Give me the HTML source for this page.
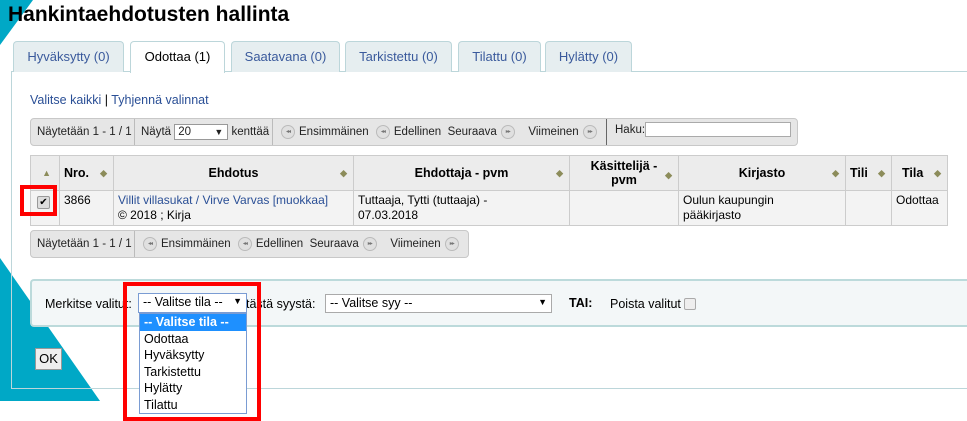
<!DOCTYPE html>
<html><head><meta charset="utf-8"><style>
*{box-sizing:border-box}
body{margin:0;width:967px;height:421px;position:relative;overflow:hidden;background:#fff;font-family:"Liberation Sans",Arial,sans-serif;font-size:12px;color:#000}
.a{position:absolute}
.tab{position:absolute;top:41px;height:31px;border:1px solid #bcd6da;border-bottom:none;background:#e6eef0;border-radius:4px 4px 0 0;color:#3a5a9c;font-size:13px;text-align:center;line-height:29px}
.tb{position:absolute;height:28px;background:#e6e6e6;border:1px solid #c8c8c8;border-radius:4px;font-size:11.5px;color:#222}
.tb > span{position:absolute;top:5px;white-space:nowrap;line-height:16px;height:16px}
.sep{position:absolute;top:0;width:1px;height:26px;background:#bbb}
.ic{display:inline-block;width:14px;height:14px;border-radius:50%;background:#e0e0e0;border:1px solid #bbb;vertical-align:top;margin:1px 4px 0;font-size:6px;line-height:12px;text-align:center;color:#777;font-style:normal;letter-spacing:-1px}
table{border-collapse:collapse;position:absolute;left:30px;top:155px;width:918px}
td,th{border:1px solid #ccc;padding:2px 4px;vertical-align:top;font-size:12px}
th{background:#ececec;height:35px;vertical-align:middle;font-size:12.5px;position:relative}
td{background:#f3f3f3;height:35px;line-height:15px}
.s{color:#8c8c5a;font-size:9px;position:absolute;right:6px;top:12px}
.lnk{color:#2a4f96}
</style></head><body>
<svg class="a" style="left:0;top:0" width="967" height="421"><polygon points="0,0 33,0 0,45" fill="#00a8c6"/><polygon points="0,258 0,401 100,401" fill="#00a8c6"/></svg>
<div class="a" style="left:8px;top:3px;font-size:21px;font-weight:bold">Hankintaehdotusten hallinta</div>
<div class="a" style="left:11px;top:71px;width:960px;height:318px;border-left:1px solid #bcd6da;border-top:1px solid #bcd6da;border-bottom:1px solid #bcd6da"></div>
<div class="tab" style="left:13px;width:111px">Hyväksytty (0)</div>
<div class="tab" style="left:130px;width:95px;background:#fff;color:#000;height:32px">Odottaa (1)</div>
<div class="tab" style="left:231px;width:109px">Saatavana (0)</div>
<div class="tab" style="left:345px;width:107px">Tarkistettu (0)</div>
<div class="tab" style="left:458px;width:83px">Tilattu (0)</div>
<div class="tab" style="left:545px;width:87px">Hylätty (0)</div>
<div class="a lnk" style="left:30px;top:93px;font-size:12.5px">Valitse kaikki <span style="color:#000">|</span> Tyhjennä valinnat</div>
<div class="tb" style="left:30px;top:118px;width:768px">
<span style="left:6px">Näytetään 1 - 1 / 1</span><div class="sep" style="left:103px"></div>
<span style="left:110px;top:5px">Näytä <span style="position:relative;display:inline-block;width:54px;height:16px;background:#fff;border:1px solid #999;vertical-align:top;padding-left:3px;line-height:14px">20<span style="position:absolute;right:4px;top:0;font-size:9px">▼</span></span> kenttää</span>
<div class="sep" style="left:241px"></div>
<span style="left:246px"><i class="ic">◂◂</i>Ensimmäinen <i class="ic">◂◂</i>Edellinen&nbsp; Seuraava<i class="ic">▸▸</i>&nbsp;&nbsp; Viimeinen<i class="ic">▸▸</i></span>
<div class="sep" style="left:575px;background:#666"></div>
<span style="left:584px;top:3px">Haku:<span style="display:inline-block;width:146px;height:15px;background:#fff;border:1px solid #aaa;vertical-align:top"></span></span>
</div>
<table>
<tr><th style="width:29px"><span class="s" style="right:8px">▲</span></th><th style="width:54px;text-align:left">Nro.<span class="s">◆</span></th><th style="width:240px">Ehdotus<span class="s">◆</span></th><th style="width:216px">Ehdottaja - pvm<span class="s">◆</span></th><th style="width:109px;line-height:14px">Käsittelijä -<br>pvm<span class="s">◆</span></th><th style="width:167px">Kirjasto<span class="s">◆</span></th><th style="width:46px;text-align:left">Tili<span class="s">◆</span></th><th style="text-align:left;padding-left:10px">Tila<span class="s">◆</span></th></tr>
<tr><td><span style="display:inline-block;width:13px;height:13px;border:1px solid #999;background:#ddd;border-radius:2px;font-size:10px;line-height:11px;text-align:center;margin:3px 0 0 2px">✔</span></td><td>3866</td><td class="lnk">Villit villasukat / Virve Varvas [muokkaa]<br><span style="color:#000">© 2018 ; Kirja</span></td><td>Tuttaaja, Tytti (tuttaaja) -<br>07.03.2018</td><td></td><td>Oulun kaupungin<br>pääkirjasto</td><td></td><td>Odottaa</td></tr>
</table>
<div class="tb" style="left:30px;top:230px;width:439px">
<span style="left:6px">Näytetään 1 - 1 / 1</span><div class="sep" style="left:103px"></div>
<span style="left:108px"><i class="ic">◂◂</i>Ensimmäinen <i class="ic">◂◂</i>Edellinen&nbsp; Seuraava<i class="ic">▸▸</i>&nbsp;&nbsp; Viimeinen<i class="ic">▸▸</i></span>
</div>
<div class="a" style="left:30px;top:279px;width:940px;height:48px;background:#f3f7f8;border:2px solid #bcdadb;border-right:none;border-radius:4px 0 0 4px"></div>
<div class="a" style="left:45px;top:297px;font-size:12.5px">Merkitse valitut:</div>
<div class="a" style="left:246px;top:297px;font-size:12.5px">tästä syystä:</div>
<div class="a" style="left:325px;top:294px;width:227px;height:19px;background:#fff;border:1px solid #aaa;font-size:12.5px;padding:1px 4px">-- Valitse syy --<span style="position:absolute;right:4px;top:2px;font-size:9px">▼</span></div>
<div class="a" style="left:569px;top:296px;font-weight:bold;font-size:12.5px">TAI:</div>
<div class="a" style="left:610px;top:297px;font-size:12.5px">Poista valitut <span style="display:inline-block;width:12px;height:12px;border:1px solid #aaa;border-radius:2px;background:#eee;vertical-align:-2px"></span></div>
<div class="a" style="left:35px;top:348px;width:27px;height:22px;border:1px solid #999;background:#eee;font-size:13px;text-align:center;line-height:20px">OK</div>
<div class="a" style="left:138px;top:293px;width:109px;height:20px;background:#fff;border:1px solid #7a9cd3;font-size:12.5px;padding:1px 4px">-- Valitse tila --<span style="position:absolute;right:4px;top:2px;font-size:9px">▼</span></div>
<div class="a" style="left:139px;top:313px;width:108px;height:101px;background:#fff;border:1px solid #7a9cd3;font-size:12.5px;line-height:16.5px">
<div style="background:#1e90ff;color:#fff;padding-left:4px;font-weight:bold">-- Valitse tila --</div>
<div style="padding-left:4px">Odottaa<br>Hyväksytty<br>Tarkistettu<br>Hylätty<br>Tilattu</div></div>
<div class="a" style="left:123px;top:282px;width:138px;height:139px;border:4px solid #f00"></div>
<div class="a" style="left:20px;top:185px;width:37px;height:31px;border:4px solid #f00"></div>
</body></html>
